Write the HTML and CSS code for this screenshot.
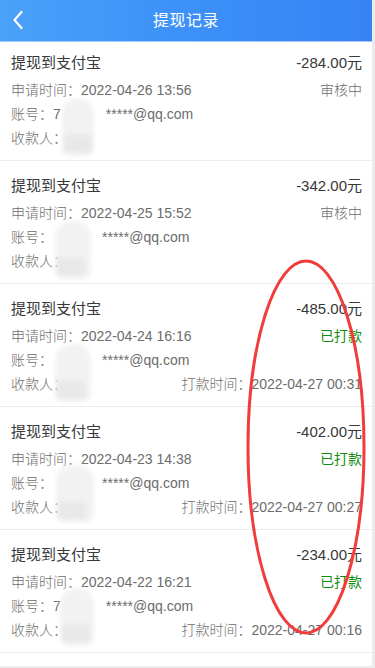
FILE: index.html
```html
<!DOCTYPE html>
<html lang="zh">
<head>
<meta charset="utf-8">
<title>提现记录</title>
<link rel="stylesheet" href="styles.css">
</head>
<body>
<div class="app">
  <header class="topbar">
    <svg class="back" width="12" height="20" viewBox="0 0 12 20"><path d="M9.5 2 L2.5 10 L9.5 18" fill="none" stroke="#fff" stroke-width="2.2" stroke-linecap="round" stroke-linejoin="round"/></svg>
    <h1 class="title">提现记录</h1>
  </header>
  <ul class="list">
    <li class="item">
      <div class="row head"><span>提现到支付宝</span><span>-284.00元</span></div>
      <div class="row"><span>申请时间：2022-04-26 13:56</span><span class="status">审核中</span></div>
      <div class="row"><span>账号：7<span class="gap"></span>*****@qq.com</span></div>
      <div class="row"><span>收款人：</span></div>
      <span class="blot b1"></span>
    </li>
    <li class="item">
      <div class="row head"><span>提现到支付宝</span><span>-342.00元</span></div>
      <div class="row"><span>申请时间：2022-04-25 15:52</span><span class="status">审核中</span></div>
      <div class="row"><span>账号：<span class="gap wide"></span>*****@qq.com</span></div>
      <div class="row"><span>收款人：</span></div>
      <span class="blot b2"></span>
    </li>
    <li class="item">
      <div class="row head"><span>提现到支付宝</span><span>-485.00元</span></div>
      <div class="row"><span>申请时间：2022-04-24 16:16</span><span class="paid">已打款</span></div>
      <div class="row"><span>账号：<span class="gap wide"></span>*****@qq.com</span></div>
      <div class="row"><span>收款人：</span><span>打款时间：2022-04-27 00:31</span></div>
      <span class="blot b3"></span>
    </li>
    <li class="item">
      <div class="row head"><span>提现到支付宝</span><span>-402.00元</span></div>
      <div class="row"><span>申请时间：2022-04-23 14:38</span><span class="paid">已打款</span></div>
      <div class="row"><span>账号：<span class="gap wide"></span>*****@qq.com</span></div>
      <div class="row"><span>收款人：</span><span>打款时间：2022-04-27 00:27</span></div>
      <span class="blot b4"></span>
    </li>
    <li class="item">
      <div class="row head"><span>提现到支付宝</span><span>-234.00元</span></div>
      <div class="row"><span>申请时间：2022-04-22 16:21</span><span class="paid">已打款</span></div>
      <div class="row"><span>账号：7<span class="gap"></span>*****@qq.com</span></div>
      <div class="row"><span>收款人：</span><span>打款时间：2022-04-27 00:16</span></div>
      <span class="blot b5"></span>
    </li>
  </ul>
  <svg class="mark" width="372" height="668" viewBox="0 0 372 668"><ellipse cx="306" cy="447" rx="58" ry="186" fill="none" stroke="#f23c3c" stroke-width="3"/></svg>
</div>
</body>
</html>
```

FILE: styles.css
```css
* { box-sizing: border-box; }
html, body { margin: 0; padding: 0; }
body {
  background: #ececec;
  font-family: "Liberation Sans", Arial, "Noto Sans CJK SC", sans-serif;
  font-weight: 300;
  color: #333;
}
.app {
  position: relative;
  width: 372px;
  min-height: 666px;
  background: #fff;
  padding-bottom: 12px;
  overflow: hidden;
}
.topbar {
  position: relative;
  height: 42px;
  background: linear-gradient(90deg, #4aa1f9 0%, #3c8ff7 55%, #3783f6 100%);
  border-bottom: 1px solid #a9c6f5;
  display: flex;
  align-items: center;
  justify-content: center;
}
.back {
  position: absolute;
  left: 12px;
  top: 10px;
}
.title {
  margin: 0;
  font-size: 16px;
  font-weight: 400;
  color: #fff;
  line-height: 22px;
  letter-spacing: 0.5px;
}
.list {
  list-style: none;
  margin: 0;
  padding: 0;
}
.item {
  position: relative;
  padding: 14px 10px 10px 11px;
  border-bottom: 1px solid #ececec;
}
.item:first-child { padding-top: 10px; }
.row {
  display: flex;
  justify-content: space-between;
  font-size: 14px;
  line-height: 24px;
  color: #6c6c6c;
  white-space: nowrap;
}
.row.head {
  font-size: 15px;
  line-height: 22px;
  font-weight: 400;
  color: #383838;
  margin-bottom: 4px;
}
.status { color: #6c6c6c; }
.paid { color: #138c13; font-weight: 400; }
.gap {
  display: inline-block;
  width: 45px;
  height: 1px;
}
.gap.wide { width: 49px; }
.blot {
  position: absolute;
  left: 60px;
  top: 56px;
  width: 32px;
  height: 58px;
  border-radius: 16px 16px 8px 8px;
  background: #f1f1f1;
  filter: blur(2px);
  opacity: 0.9;
}
.blot::after {
  content: "";
  position: absolute;
  left: 2px;
  bottom: 4px;
  width: 28px;
  height: 17px;
  background: #e6e6e6;
}
.b1 { top: 56px; left: 62px; }
.b2 { top: 60px; left: 55px; width: 36px; }
.b3 { top: 60px; left: 55px; width: 36px; }
.b4 { top: 58px; left: 56px; width: 38px; }
.b5 { top: 58px; left: 60px; width: 34px; }
.mark {
  position: absolute;
  left: 0;
  top: 0;
  pointer-events: none;
}
```
